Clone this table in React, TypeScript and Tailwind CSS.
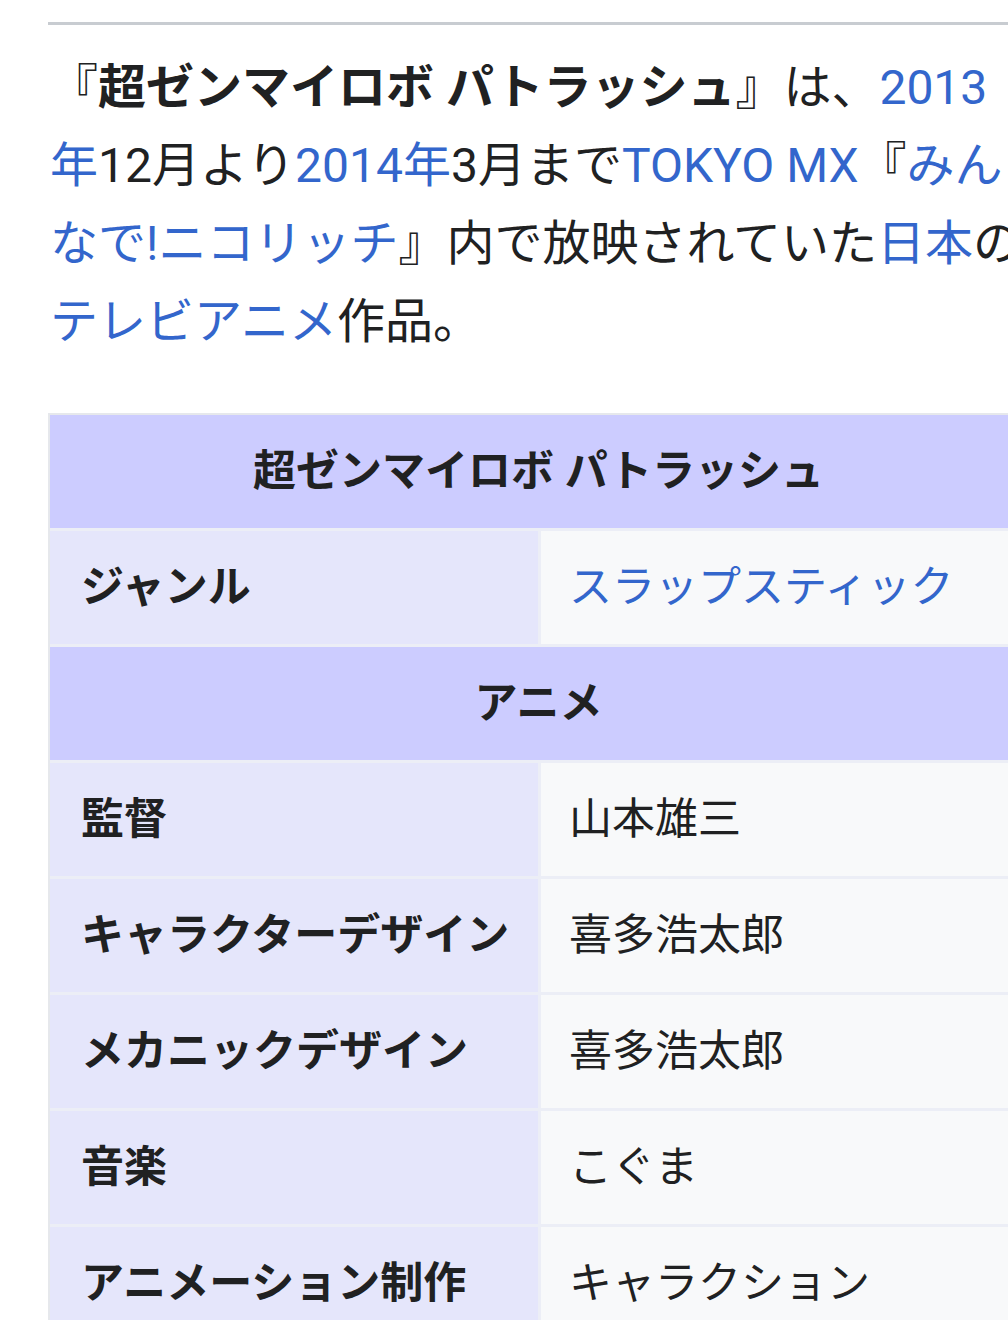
const FONT = "font-['Roboto','Noto_Sans_CJK_JP',sans-serif]";

type Row = { label: string; value: string; link?: boolean };

const genre: Row = { label: "ジャンル", value: "スラップスティック", link: true };

const anime: Row[] = [
  { label: "監督", value: "山本雄三" },
  { label: "キャラクターデザイン", value: "喜多浩太郎" },
  { label: "メカニックデザイン", value: "喜多浩太郎" },
  { label: "音楽", value: "こぐま" },
  { label: "アニメーション制作", value: "キャラクション" },
];

const A = ({ children }: { children: React.ReactNode }) => (
  <a href="#" className="text-[#3366cc]">
    {children}
  </a>
);

const Header = ({ title }: { title: string }) => (
  <div className="h-[113px] bg-[#ccccff] flex items-center justify-center font-bold">
    {title}
  </div>
);

const DataRow = ({ row }: { row: Row }) => (
  <div className="grid grid-cols-[488px_1fr] gap-x-[3px] h-[113px]">
    <div className="bg-[#e5e6fb] flex items-center pl-[31px] font-bold whitespace-nowrap">
      {row.label}
    </div>
    <div className="bg-[#f8f9fa] flex items-center pl-[28px]">
      {row.link ? <A>{row.value}</A> : row.value}
    </div>
  </div>
);

export default function App() {
  return (
    <div className={`w-[1008px] h-[1320px] overflow-hidden bg-white text-[#202122] ${FONT}`}>
      <div className="w-[1060px] pt-[22px]">
        <div className="ml-[48px] h-[3px] bg-[#c8ccd1]" />

        <p className="ml-[50px] w-[977px] mt-[24px] text-[48px] leading-[78px]">
          『<b>超ゼンマイロボ パトラッシュ</b>』は、<A>2013年</A>12月より<A>2014年</A>3月まで
          <A>TOKYO MX</A>『<A>みんなで!ニコリッチ</A>』内で放映されていた<A>日本</A>の
          <A>テレビアニメ</A>作品。
        </p>

        <div className="ml-[48px] mt-[52px] w-[981px] border-2 border-[#e6e8ec] text-[43px] leading-none">
          <div className="flex flex-col gap-y-[3px] bg-[#eceef6]">
            <Header title="超ゼンマイロボ パトラッシュ" />
            <DataRow row={genre} />
            <Header title="アニメ" />
            {anime.map((r) => (
              <DataRow key={r.label} row={r} />
            ))}
          </div>
        </div>
      </div>
    </div>
  );
}
